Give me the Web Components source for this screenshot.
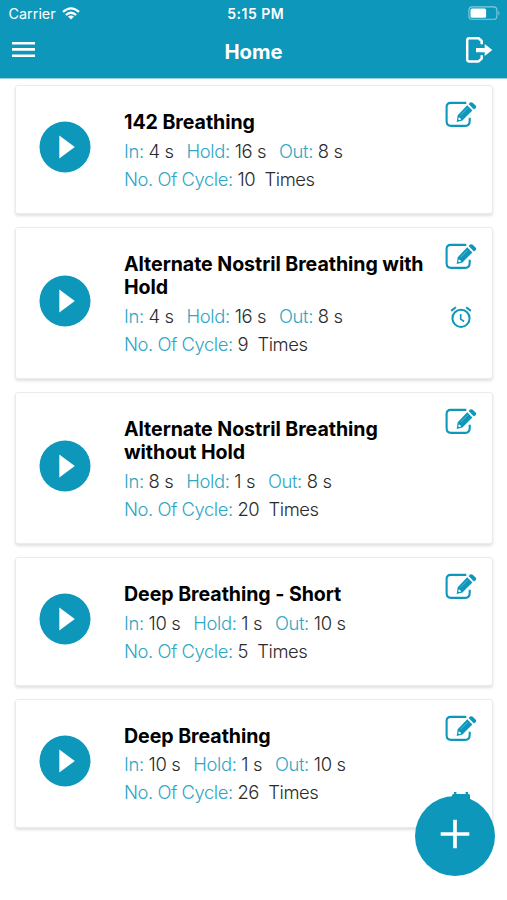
<!DOCTYPE html>
<html lang="en">
<head>
<meta charset="utf-8">
<title>Home</title>
<style>
html, body { margin: 0; height: 100%; background: #fff; overflow: hidden; }
body { font-family: Inter, "Liberation Sans", sans-serif; }
</style>
</head>
<body>
<breath-app></breath-app>
<script>
const define = (name, html, init) => {
  const template = document.createElement('template');
  template.innerHTML = html;
  customElements.define(name, class extends HTMLElement {
    constructor() {
      super();
      this.attachShadow({ mode: 'open' }).append(template.content.cloneNode(true));
    }
    connectedCallback() { if (init) init(this, this.shadowRoot); }
  });
};

const glyphs = {
  wifi: [18, 13, '<g fill="none" stroke="currentColor" stroke-width="2.3"><path d="M1 4.9Q9-2.1 17 4.9"/><path d="M3.9 8Q9 3.5 14.1 8"/></g><path fill="currentColor" d="M6 9.6Q9 7.4 12 9.6L9 12.6Z"/>'],
  battery: [34, 15, '<rect x=".9" y=".9" width="28" height="12.4" rx="3.4" fill="none" stroke="currentColor" stroke-opacity=".5" stroke-width="1.1"/><rect x="2.5" y="2.4" width="15.6" height="9.4" rx="1.6" fill="currentColor"/><path fill="currentColor" fill-opacity=".5" d="M30.4 4.7q2.2 2.4 0 4.8z"/>'],
  menu: [24, 17, '<path fill="none" stroke="currentColor" stroke-width="2.6" d="M0 2.2h23M0 8.4h23M0 14.7h23"/>'],
  exit: [28, 28, '<path fill="none" stroke="currentColor" stroke-width="2.5" stroke-linejoin="round" d="M16.7 8.3V5L13.6 2.2H4.4Q2.2 2.2 2.2 4.4v18.8q0 2.2 2.2 2.2h9.2l3.1-2.8v-3.4"/><path fill="currentColor" d="M11 11.9h8.7V8.1l7.6 6-7.6 6v-3.8H11z"/>'],
  edit: [32, 27, '<path fill="none" stroke="currentColor" stroke-width="2.1" d="M21.3 1.9H5.6Q1.6 1.9 1.6 6v14q0 4.9 4.5 4.9h13.4q5.2 0 5.2-5v-3.1"/><path fill="currentColor" fill-rule="evenodd" d="M22.2 4.2l5.2 5.2-10 10.1-5.7 1.4 1-6.7zM13.9 16.4q1.8 0 2 2-1.1 1-2.5.4-.5-1.3.5-2.4z"/><path fill="currentColor" d="M23.6 2.9l1.4-1.3q1.4-.9 2.7.1l3.1 3.1q.9 1.1 0 2.2l-1.9 1.5z"/><path fill="none" stroke="#fff" stroke-opacity=".45" stroke-width=".7" d="M15.6 14.1l7-7"/>'],
  alarm: [22, 22, '<circle cx="11" cy="12.3" r="8.6" fill="none" stroke="currentColor" stroke-width="2"/><path fill="none" stroke="currentColor" stroke-width="1.6" d="M10.7 8v5.2l3.4 2.3"/><path fill="none" stroke="currentColor" stroke-width="2" d="M1.2 4.9l4.6-3.7M20.8 4.9l-4.6-3.7"/>'],
  calendar: [20, 22, '<path fill="currentColor" d="M3 2V0h2.4v2h9.2V0H17v2h.5Q19 2 19 3.5v16q0 1.5-1.5 1.5h-15Q1 21 1 19.5v-16Q1 2 2.5 2z"/>'],
  play: [52, 52, '<circle cx="26" cy="26" r="25.5" fill="currentColor"/><path fill="#fff" d="M20.3 14.6L35.8 26 20.3 37.6z"/>'],
  plus: [30, 30, '<path fill="none" stroke="currentColor" stroke-width="3.7" d="M15 .7v28.6M.7 15h28.6"/>']
};
define('app-icon', '<style>:host{display:block;flex:none}svg{display:block}</style>', (el, root) => {
  const [w, h, body] = glyphs[el.getAttribute('name')];
  root.innerHTML += `<svg width="${w}" height="${h}" viewBox="0 0 ${w} ${h}">${body}</svg>`;
});

define('status-bar', `<style>
:host { display: grid; grid-template-columns: 1fr auto 1fr; align-items: center; height: 27px; padding: 0 5px 0 8.5px; box-sizing: border-box; font-size: 14.4px; }
.left { display: flex; align-items: center; gap: 6px; margin-right: -1px; }
.time { font-weight: 600; font-size: 14px; letter-spacing: .5px; margin-left: 1px; }
app-icon[name=battery] { justify-self: end; }
</style><div class="left"><span>Carrier</span><app-icon name="wifi"></app-icon></div><span class="time">5:15 PM</span><app-icon name="battery"></app-icon>`);

define('nav-bar', `<style>
:host { display: grid; grid-template-columns: 1fr auto 1fr; align-items: center; height: 46px; padding: 0 14px 0 12px; }
.title { font-size: 20.3px; font-weight: 700; padding: 3px 0 0 2px; }
app-icon[name=menu] { margin-bottom: 1px; }
app-icon[name=exit] { justify-self: end; margin-right: .3px; margin-bottom: 1px; }
</style><app-icon name="menu"></app-icon><span class="title"><slot></slot></span><app-icon name="exit"></app-icon>`);

define('app-header', `<style>
:host { display: block; height: 78px; background: #0c97bb; color: #fff; border-bottom: 1px solid #8fd0e0; }
</style><slot></slot>`);

define('stat-item', `<style>
:host { display: inline; color: #2b2b2b; }
.label { color: #2fa6c4; }
</style><span class="label"></span>&nbsp;<slot></slot>`, (el, root) => {
  root.querySelector('.label').textContent = el.getAttribute('label');
});

define('breath-card', `<style>
:host { display: flex; box-sizing: border-box; background: #fff; color: #0c97bb; border: 1px solid #ebebeb; border-radius: 3px; box-shadow: 0 2px 3px rgba(0,0,0,.12); padding: 0 15px 0 23px; }
.play { align-self: center; margin-bottom: 5px; }
.text { flex: 1; padding: 25px 0 20.7px 33px; min-width: 0; }
h2 { margin: 0 0 2.6px; font-size: 19.6px; line-height: 23.2px; font-weight: 660; letter-spacing: -.06px; color: #000; width: 306px; white-space: pre-line; }
.row { display: flex; gap: 12.8px; font-size: 18.4px; font-weight: 320; letter-spacing: -.36px; line-height: 28px; white-space: nowrap; }
.row + .row { letter-spacing: -.44px; }
.side { display: flex; flex-direction: column; align-items: center; width: 32px; height: 0; padding-top: 15px; gap: 36px; }
::slotted([name=calendar]) { margin-top: 14px; }
</style>
<app-icon class="play" name="play"></app-icon>
<div class="text"><h2></h2>
<div class="row"><stat-item class="in" label="In:"></stat-item><stat-item class="hold" label="Hold:"></stat-item><stat-item class="out" label="Out:"></stat-item></div>
<div class="row"><stat-item class="cycle" label="No. Of Cycle:"></stat-item></div></div>
<div class="side"><app-icon name="edit"></app-icon><slot></slot></div>`, (el, root) => {
  root.querySelector('h2').textContent = el.getAttribute('name');
  for (const key of ['in', 'hold', 'out']) root.querySelector('.' + key).textContent = el.getAttribute(key) + ' s';
  root.querySelector('.cycle').textContent = el.getAttribute('cycle') + '\u00a0 Times';
});

define('add-button', `<style>
:host { position: absolute; right: 12px; bottom: 24px; width: 80px; height: 80px; border-radius: 50%; background: #0c97bb; color: #fff; display: flex; align-items: center; justify-content: center; padding-bottom: 4px; box-sizing: border-box; }
</style><app-icon name="plus"></app-icon>`);

define('breath-app', `<style>
:host { display: block; position: relative; height: 900px; }
main { display: flex; flex-direction: column; gap: 12.3px; padding: 6px 14.5px 0 15px; }
</style>
<app-header><status-bar></status-bar><nav-bar>Home</nav-bar></app-header>
<main>
<breath-card name="142 Breathing" in="4" hold="16" out="8" cycle="10"></breath-card>
<breath-card name="Alternate Nostril Breathing with Hold" in="4" hold="16" out="8" cycle="9"><app-icon name="alarm"></app-icon></breath-card>
<breath-card name="Alternate Nostril Breathing without Hold" in="8" hold="1" out="8" cycle="20"></breath-card>
<breath-card name="Deep Breathing - Short" in="10" hold="1" out="10" cycle="5"></breath-card>
<breath-card name="Deep Breathing" in="10" hold="1" out="10" cycle="26"><app-icon name="calendar"></app-icon></breath-card>
</main>
<add-button></add-button>`);
</script>
</body>
</html>
